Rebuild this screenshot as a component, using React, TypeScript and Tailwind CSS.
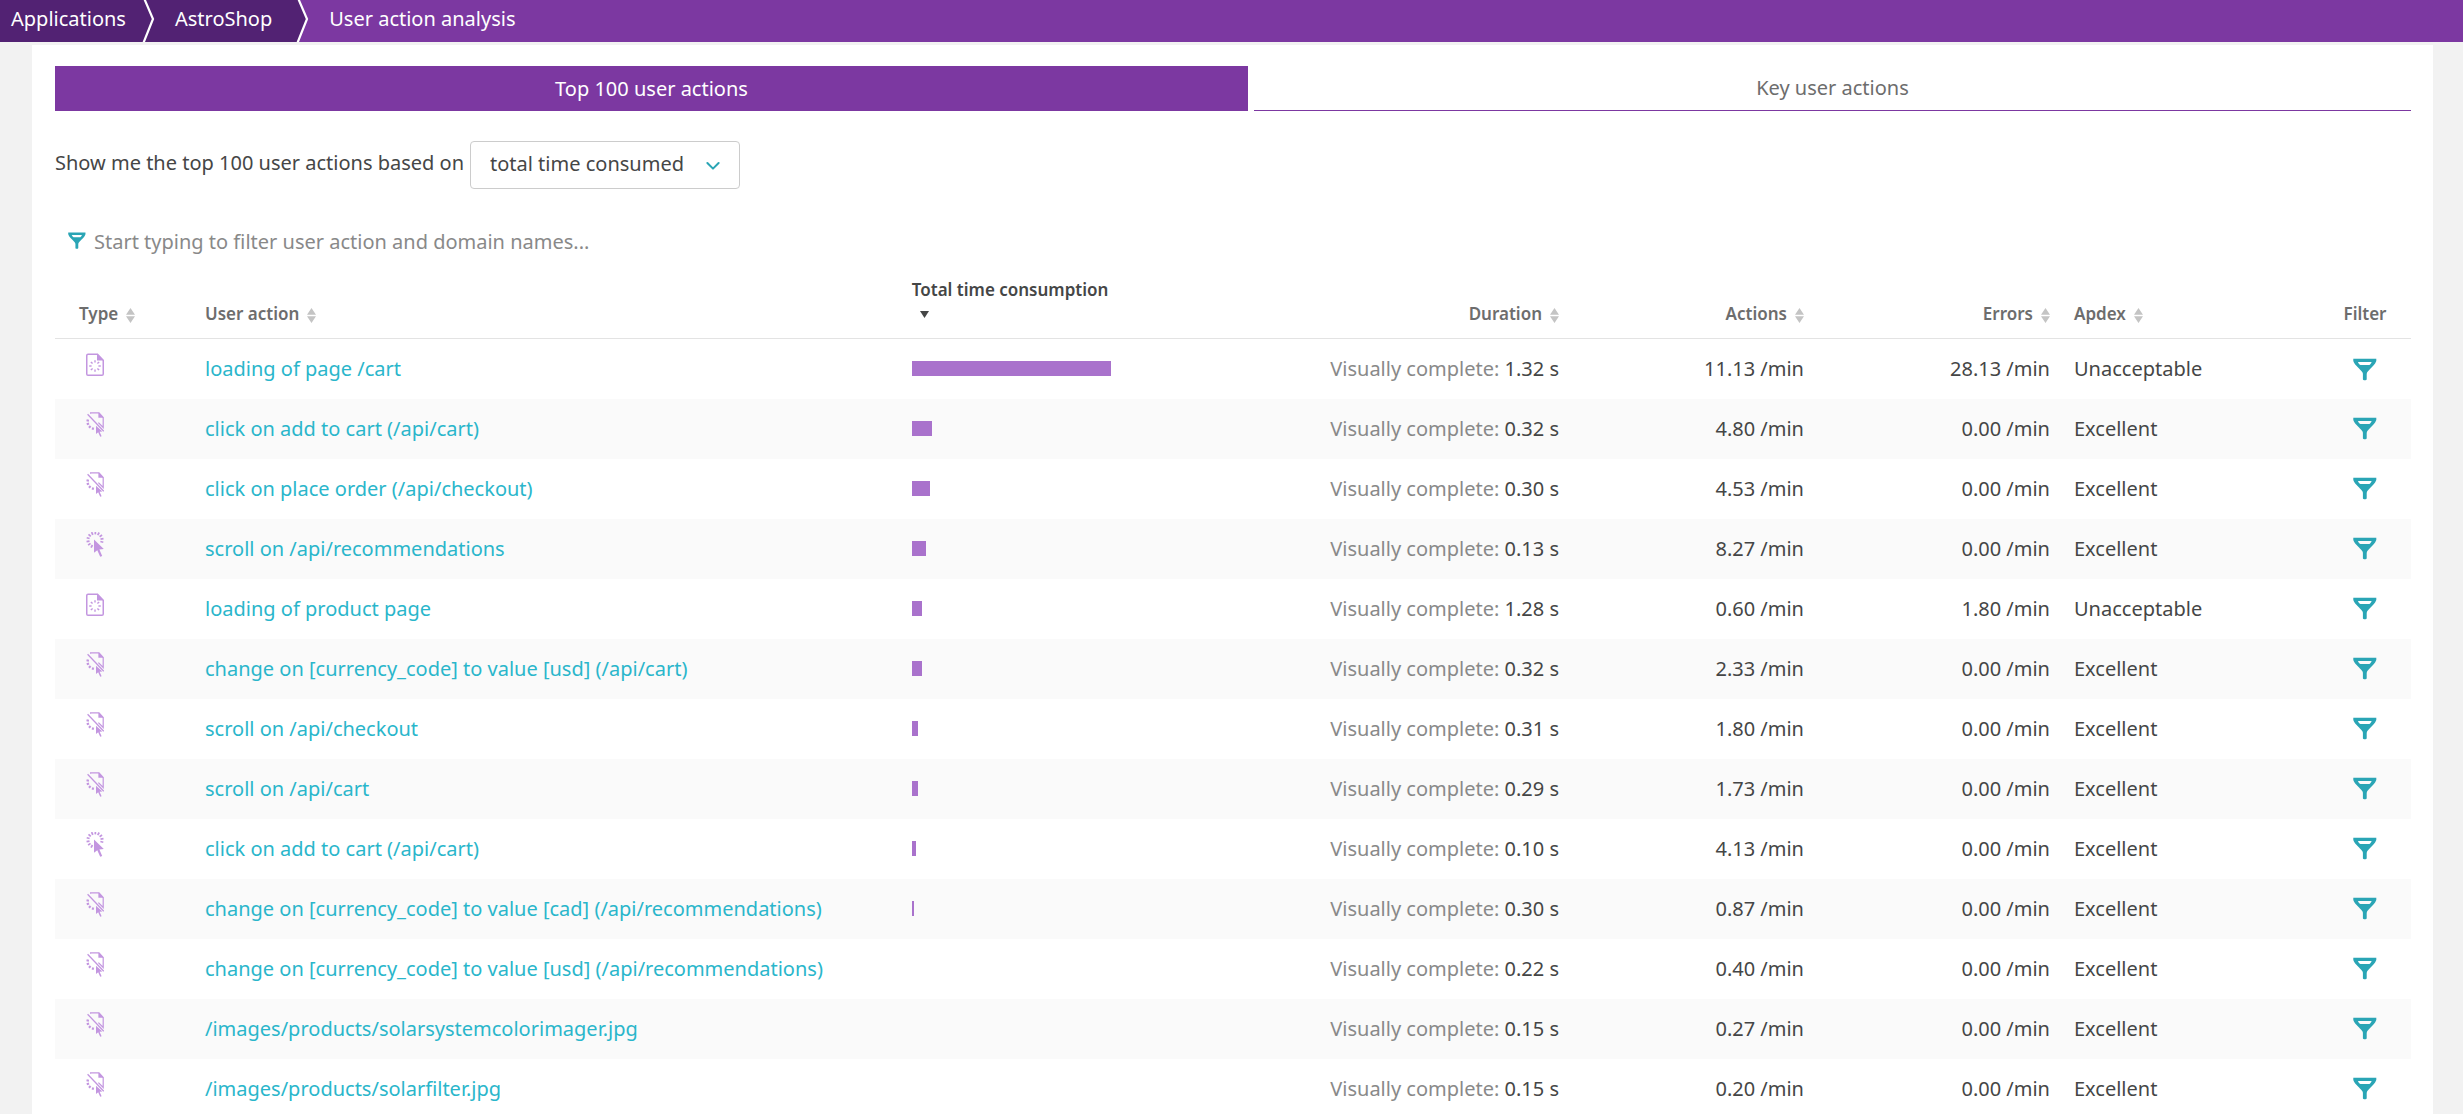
import { useState } from 'react';

type Kind = 'load' | 'xhr' | 'custom';
type Row = {
  kind: Kind;
  name: string;
  share: number;
  duration: string;
  actions: string;
  errors: string;
  apdex: string;
};

const ROWS: Row[] = [
  { kind: 'load', name: 'loading of page /cart', share: 100, duration: '1.32 s', actions: '11.13', errors: '28.13', apdex: 'Unacceptable' },
  { kind: 'xhr', name: 'click on add to cart (/api/cart)', share: 10, duration: '0.32 s', actions: '4.80', errors: '0.00', apdex: 'Excellent' },
  { kind: 'xhr', name: 'click on place order (/api/checkout)', share: 9, duration: '0.30 s', actions: '4.53', errors: '0.00', apdex: 'Excellent' },
  { kind: 'custom', name: 'scroll on /api/recommendations', share: 7, duration: '0.13 s', actions: '8.27', errors: '0.00', apdex: 'Excellent' },
  { kind: 'load', name: 'loading of product page', share: 5, duration: '1.28 s', actions: '0.60', errors: '1.80', apdex: 'Unacceptable' },
  { kind: 'xhr', name: 'change on [currency_code] to value [usd] (/api/cart)', share: 5, duration: '0.32 s', actions: '2.33', errors: '0.00', apdex: 'Excellent' },
  { kind: 'xhr', name: 'scroll on /api/checkout', share: 3, duration: '0.31 s', actions: '1.80', errors: '0.00', apdex: 'Excellent' },
  { kind: 'xhr', name: 'scroll on /api/cart', share: 3, duration: '0.29 s', actions: '1.73', errors: '0.00', apdex: 'Excellent' },
  { kind: 'custom', name: 'click on add to cart (/api/cart)', share: 2, duration: '0.10 s', actions: '4.13', errors: '0.00', apdex: 'Excellent' },
  { kind: 'xhr', name: 'change on [currency_code] to value [cad] (/api/recommendations)', share: 1, duration: '0.30 s', actions: '0.87', errors: '0.00', apdex: 'Excellent' },
  { kind: 'xhr', name: 'change on [currency_code] to value [usd] (/api/recommendations)', share: 0, duration: '0.22 s', actions: '0.40', errors: '0.00', apdex: 'Excellent' },
  { kind: 'xhr', name: '/images/products/solarsystemcolorimager.jpg', share: 0, duration: '0.15 s', actions: '0.27', errors: '0.00', apdex: 'Excellent' },
  { kind: 'xhr', name: '/images/products/solarfilter.jpg', share: 0, duration: '0.15 s', actions: '0.20', errors: '0.00', apdex: 'Excellent' },
];

function Rays({ cx, cy, inner, outer, angles, width }: { cx: number; cy: number; inner: number; outer: number; angles: number[]; width: number }) {
  return (
    <g stroke="currentColor" strokeWidth={width}>
      {angles.map((a) => {
        const c = Math.cos((a * Math.PI) / 180);
        const s = Math.sin((a * Math.PI) / 180);
        return <line key={a} x1={cx + inner * c} y1={cy + inner * s} x2={cx + outer * c} y2={cy + outer * s} />;
      })}
    </g>
  );
}

const LABELS: Record<Kind, string> = { load: 'Load action', xhr: 'XHR action', custom: 'Custom action' };

function TypeIcon({ kind }: { kind: Kind }) {
  return (
    <svg role="img" aria-label={LABELS[kind]} className="h-[26px] w-[18px] text-[#c396e0]" viewBox="0 0 18 26" fill="none">
      {kind === 'load' && (
        <>
          <path d="M2 2.25h9.5l5.75 6V22a1.3 1.3 0 0 1-1.3 1.3H2A1.3 1.3 0 0 1 .75 22V3.5A1.3 1.3 0 0 1 2 2.25Z" stroke="currentColor" strokeWidth="1.5" />
          <path d="M11 1.8 17.6 8.6H11Z" fill="currentColor" />
          <Rays cx={9} cy={14} inner={3.4} outer={5.8} width={1.4} angles={[0, 45, 90, 135, 180, 225, 270, 315]} />
        </>
      )}
      {kind === 'xhr' && (
        <>
          <path d="M4.6 1.8V.9H13l4.2 4.6v10L12.4 10.6" stroke="currentColor" strokeWidth="1.2" />
          <path d="M12.4.6 17.6 5.8H12.4Z" fill="currentColor" />
          <path d="M1.6 2.2 17.8 19.2" stroke="currentColor" strokeWidth="1.3" />
          <Rays cx={8.6} cy={9.8} inner={5.8} outer={8.2} width={2} angles={[104, 134, 163, 191]} />
          <path d="M10 13.8v8.2l2.2-1.7 2 4.5 1.4-.6-2-4.5 2.8-.3Z" fill="currentColor" />
        </>
      )}
      {kind === 'custom' && (
        <>
          <Rays cx={9} cy={8} inner={5.6} outer={8.6} width={1.7} angles={[15, -9, -35, -61, -87, -113, -139, -165, 169, 143, 117]} />
          <path d="M8 7.6v13.2l3.3-2.5 2.9 6.5 2-.9-2.8-6.4 4.4-.6Z" fill="currentColor" />
        </>
      )}
    </svg>
  );
}

function Funnel({ className }: { className: string }) {
  return (
    <svg aria-hidden="true" className={className} viewBox="0 0 24 24" fill="currentColor">
      <path fillRule="evenodd" d="M.3.8H23.3V3C22.2 6.6 19 9 15 13.2 14.2 14 13.7 15 13.7 16V21.2c0 1.5-3.8 1.5-3.8 0V16c0-1-.5-2-1.3-2.8C4.8 9 1.4 6.6.3 3ZM5 4C5.4 5.4 6.2 6.4 7.4 7h9c1-.6 1.8-1.6 2.2-3Z" />
    </svg>
  );
}

function SortIcon() {
  return (
    <svg aria-hidden="true" className="ml-2 inline-block h-[15px] w-[9px] text-[#c4c4c4]" viewBox="0 0 9 15" fill="currentColor">
      <path d="M4.5 0 9 6.8H0ZM4.5 15 0 8.2H9Z" />
    </svg>
  );
}

function Separator({ next }: { next: string }) {
  return (
    <svg aria-hidden="true" className={`h-[42px] w-[13px] shrink-0 ${next}`} viewBox="0 0 13 42">
      <path d="M3 0 11 19 1 42H0V0Z" fill="#522273" />
      <path d="M2.4-1 11 19 1.4 43" fill="none" stroke="#ffffff" strokeWidth="2.2" />
    </svg>
  );
}

function Head({ label, right }: { label: string; right?: boolean }) {
  return (
    <th scope="col" className={`px-3 pb-3 align-bottom font-semibold ${right ? 'text-right' : 'text-left'}`}>
      <button type="button" className="whitespace-nowrap">
        {label}
        <SortIcon />
      </button>
    </th>
  );
}

export default function App() {
  const [tab, setTab] = useState('top');
  const [metric, setMetric] = useState('total time consumed');
  const [query, setQuery] = useState('');
  const rows = ROWS.filter((r) => r.name.toLowerCase().includes(query.toLowerCase()));
  const active = 'bg-[#7c38a1] text-white';
  const idle = 'border-b border-[#7c38a1] text-[#6d6d6d]';

  return (
    <div className="min-h-screen bg-[#f2f2f2] font-['Noto_Sans','Open_Sans',sans-serif] text-[20px] leading-6 text-[#454646]">
      <nav aria-label="Breadcrumb" className="flex h-[42px] bg-[#7c38a1] text-white">
        <a href="#applications" className="flex items-center bg-[#522273] pr-4 pb-1 pl-[11px]">Applications</a>
        <Separator next="bg-[#522273]" />
        <a href="#astroshop" className="flex items-center bg-[#522273] pr-6 pb-1 pl-5">AstroShop</a>
        <Separator next="bg-[#7c38a1]" />
        <a href="#analysis" aria-current="page" className="flex items-center px-5 pb-1">User action analysis</a>
      </nav>

      <main className="mt-[3px] mr-[30px] ml-8 bg-white pt-[21px] pr-[22px] pl-[23px]">
        <div role="tablist" className="grid grid-cols-[1193fr_1157fr] gap-1.5">
          <button type="button" role="tab" aria-selected={tab === 'top'} onClick={() => setTab('top')} className={`h-[45px] ${tab === 'top' ? active : idle}`}>
            Top 100 user actions
          </button>
          <button type="button" role="tab" aria-selected={tab === 'key'} onClick={() => setTab('key')} className={`h-[45px] ${tab === 'key' ? active : idle}`}>
            Key user actions
          </button>
        </div>

        <div className="mt-[30px] flex items-center gap-1.5">
          <label htmlFor="metric" className="pb-1">Show me the top 100 user actions based on</label>
          <div className="relative">
            <select id="metric" value={metric} onChange={(e) => setMetric(e.target.value)} className="h-12 w-[270px] appearance-none rounded border border-[#cccccc] bg-white pr-12 pb-0.5 pl-[19px]">
              <option>total time consumed</option>
              <option>duration</option>
              <option>actions</option>
              <option>errors</option>
            </select>
            <svg aria-hidden="true" className="pointer-events-none absolute top-5 right-5 h-[10px] w-[14px]" viewBox="0 0 14 10" fill="none">
              <path d="M1.4 2 7 7.6 12.6 2" stroke="#2aa5b5" strokeWidth="2" strokeLinecap="round" strokeLinejoin="round" />
            </svg>
          </div>
        </div>

        <label className="mt-7 flex h-12 items-center gap-2 pl-[13px]">
          <Funnel className="size-[18px] shrink-0 text-[#2aa5b5]" />
          <input
            type="text"
            aria-label="Filter user actions"
            placeholder="Start typing to filter user action and domain names..."
            value={query}
            onChange={(e) => setQuery(e.target.value)}
            className="h-full grow outline-none placeholder:text-[#898989]"
          />
        </label>

        <table className="mt-[13px] w-full table-fixed">
          <colgroup>
            <col className="w-[138px]" />
            <col className="w-[30%]" />
            <col className="w-[223px]" />
            <col />
            <col className="w-[245px]" />
            <col className="w-[246px]" />
            <col className="w-[257px]" />
            <col className="w-[92px]" />
          </colgroup>
          <thead>
            <tr className="border-b border-[#e3e3e3] text-[17px] text-[#6d6d6d]">
              <th scope="col" className="pb-3 pl-6 text-left align-bottom font-semibold">
                <button type="button" className="whitespace-nowrap">
                  Type
                  <SortIcon />
                </button>
              </th>
              <Head label="User action" />
              <th scope="col" aria-sort="descending" className="px-3 pb-3 text-left align-bottom font-semibold text-[#454646]">
                <button type="button" className="flex flex-col items-start whitespace-nowrap">
                  <span>Total time consumption</span>
                  <span className="flex h-6 items-center pl-2">
                    <svg aria-hidden="true" className="h-[7px] w-[9px]" viewBox="0 0 9 7" fill="currentColor">
                      <path d="M0 0H9L4.5 7Z" />
                    </svg>
                  </span>
                </button>
              </th>
              <Head label="Duration" right />
              <Head label="Actions" right />
              <Head label="Errors" right />
              <Head label="Apdex" />
              <th scope="col" className="pb-3 text-center align-bottom font-semibold">Filter</th>
            </tr>
          </thead>
          <tbody>
            {rows.map((r) => (
              <tr key={r.name + r.actions} className="h-[60px] even:bg-[#fafafa]">
                <td className="pt-[13px] pl-[31px] align-top"><TypeIcon kind={r.kind} /></td>
                <td className="truncate px-3"><a href="#action" className="text-[#2ab6cb]">{r.name}</a></td>
                <td className="px-3">
                  <div className="h-[15px] bg-[#a972cc]" style={{ width: `${r.share}%` }} />
                </td>
                <td className="px-3 text-right whitespace-nowrap"><span className="text-[#898989]">Visually complete:</span> {r.duration}</td>
                <td className="px-3 text-right whitespace-nowrap">{r.actions} /min</td>
                <td className="px-3 text-right whitespace-nowrap">{r.errors} /min</td>
                <td className="px-3">{r.apdex}</td>
                <td className="text-center">
                  <button type="button" aria-label={`Filter by ${r.name}`} className="inline-flex align-middle text-[#2aa5b5]">
                    <Funnel className="size-6" />
                  </button>
                </td>
              </tr>
            ))}
          </tbody>
        </table>
      </main>
    </div>
  );
}
